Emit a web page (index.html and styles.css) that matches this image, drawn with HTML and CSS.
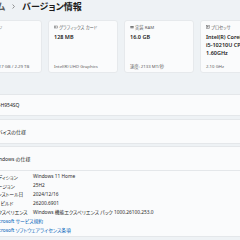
FILE: index.html
```html
<!DOCTYPE html>
<html lang="ja">
<head>
<meta charset="utf-8">
<link rel="stylesheet" href="styles.css">
</head>
<body>
<div class="page">
  <header class="crumbs">
    <span class="parent">システム</span>
    <svg class="chev" viewBox="0 0 3 5" width="3" height="5"><path d="M0.6 0.5 L2.4 2.5 L0.6 4.5" fill="none" stroke="#6b6b6b" stroke-width="0.7"/></svg>
    <h1 class="title">バージョン情報</h1>
  </header>

  <section class="specs">
    <div class="spec">
      <div class="spec-label"><svg class="ico" viewBox="0 0 4 4"><rect x="0.3" y="0.8" width="3.4" height="2.4" fill="none" stroke="#666" stroke-width="0.5"/></svg>ストレージ</div>
      <div class="spec-value">2.29 TB</div>
      <div class="spec-foot">使用済み 317 GB / 2.29 TB</div>
    </div>
    <div class="spec">
      <div class="spec-label"><svg class="ico" viewBox="0 0 4 4"><rect x="0.3" y="1" width="3.4" height="2" fill="none" stroke="#666" stroke-width="0.5"/><rect x="1" y="1.6" width="1" height="0.8" fill="#666"/></svg>グラフィックス カード</div>
      <div class="spec-value">128 MB</div>
      <div class="spec-foot">Intel(R) UHD Graphics</div>
    </div>
    <div class="spec">
      <div class="spec-label"><svg class="ico" viewBox="0 0 4 4"><rect x="0.3" y="1" width="3.4" height="1.8" fill="#777"/><path d="M0.8 3.2v0.6M1.6 3.2v0.6M2.4 3.2v0.6M3.2 3.2v0.6" stroke="#777" stroke-width="0.4"/></svg>実装 RAM</div>
      <div class="spec-value">16.0 GB</div>
      <div class="spec-foot">速度: 2133 MT/秒</div>
    </div>
    <div class="spec">
      <div class="spec-label"><svg class="ico" viewBox="0 0 4 4"><rect x="0.5" y="0.5" width="3" height="3" fill="none" stroke="#666" stroke-width="0.5"/><rect x="1.4" y="1.4" width="1.2" height="1.2" fill="none" stroke="#666" stroke-width="0.4"/></svg>プロセッサ</div>
      <div class="spec-value">Intel(R) Core(TM) <span class="nowrap">i5-10210U</span> CPU @ 1.60GHz</div>
      <div class="spec-foot">2.10 GHz</div>
    </div>
  </section>

  <div class="row row-name">DESKTOP-H954SQ</div>
  <div class="row row-spec">デバイスの仕様</div>

  <div class="expander">
    <div class="exp-head">Windows の仕様</div>
    <div class="details">
      <div class="detail"><span class="dt">エディション</span><span class="dd">Windows 11 Home</span></div>
      <div class="detail"><span class="dt">バージョン</span><span class="dd">25H2</span></div>
      <div class="detail"><span class="dt">インストール日</span><span class="dd">2024/12/16</span></div>
      <div class="detail"><span class="dt">OS ビルド</span><span class="dd">26200.6901</span></div>
      <div class="detail"><span class="dt">エクスペリエンス</span><span class="dd">Windows 機能エクスペリエンス パック 1000.26100.253.0</span></div>
      <div class="detail"><a class="link" href="#">Microsoft サービス規約</a></div>
      <div class="detail"><a class="link" href="#">Microsoft ソフトウェアライセンス条項</a></div>
    </div>
  </div>
</div>
</body>
</html>
```

FILE: styles.css
```css
html, body {
  margin: 0;
  padding: 0;
}
body {
  width: 240px;
  height: 240px;
  overflow: hidden;
  background: #eef2f5;
  font-family: "Noto Sans", "Noto Sans CJK JP", sans-serif;
  font-feature-settings: "palt";
  color: #1b1b1b;
}
.page {
  margin-left: -28px;
  width: 420px;
}
.crumbs {
  display: flex;
  align-items: center;
  height: 13px;
  margin-bottom: 7px;
}
.parent {
  font-size: 9px;
  font-weight: 600;
  color: #5c5c5c;
  line-height: 13px;
}
.chev {
  display: block;
  margin: 0 7px 0 7px;
}
.title {
  margin: 0;
  font-size: 9px;
  font-weight: 700;
  line-height: 13px;
  color: #1a1a1a;
}
.specs {
  display: grid;
  grid-template-columns: repeat(4, 70px);
  gap: 6px;
  height: 53px;
  margin-bottom: 21px;
}
.spec {
  box-sizing: border-box;
  display: flex;
  flex-direction: column;
  background: #fafbfc;
  border: 1px solid #e6e9ec;
  border-radius: 3px;
  padding: 3px 5px 3px 5px;
  overflow: hidden;
}
.spec-label {
  display: flex;
  align-items: center;
  gap: 1px;
  font-size: 4.3px;
  line-height: 6px;
  color: #5f5f5f;
  white-space: nowrap;
}
.ico {
  width: 4px;
  height: 4px;
  flex: none;
}
.spec-value {
  margin-top: 3px;
  font-size: 5.5px;
  font-weight: 600;
  line-height: 8px;
  color: #1b1b1b;
}
.nowrap {
  white-space: nowrap;
}
.spec-foot {
  margin-top: auto;
  font-size: 4.3px;
  line-height: 6px;
  color: #616161;
  white-space: nowrap;
}
.row {
  box-sizing: border-box;
  display: flex;
  align-items: center;
  background: #fafbfc;
  border: 1px solid #e4e7ea;
  border-radius: 3px;
  font-size: 5px;
}
.row-name {
  height: 22px;
  margin-bottom: 3px;
  padding-left: 4px;
}
.row-spec {
  height: 25px;
  margin-bottom: 2px;
  padding-left: 20px;
}
.expander {
  box-sizing: border-box;
  background: #fafbfc;
  border: 1px solid #e4e7ea;
  border-radius: 3px;
  height: 91px;
}
.exp-head {
  box-sizing: border-box;
  height: 24px;
  display: flex;
  align-items: center;
  padding-left: 20px;
  font-size: 5px;
  border-bottom: 1px solid #e4e7ea;
}
.details {
  padding: 1px 0 0 20px;
}
.detail {
  display: flex;
  height: 8.8px;
  align-items: center;
  font-size: 4.8px;
  white-space: nowrap;
}
.dt {
  width: 40px;
  flex: none;
  color: #1b1b1b;
}
.dd {
  color: #2b2b2b;
}
.link {
  color: #005fb8;
  text-decoration: none;
}
```
